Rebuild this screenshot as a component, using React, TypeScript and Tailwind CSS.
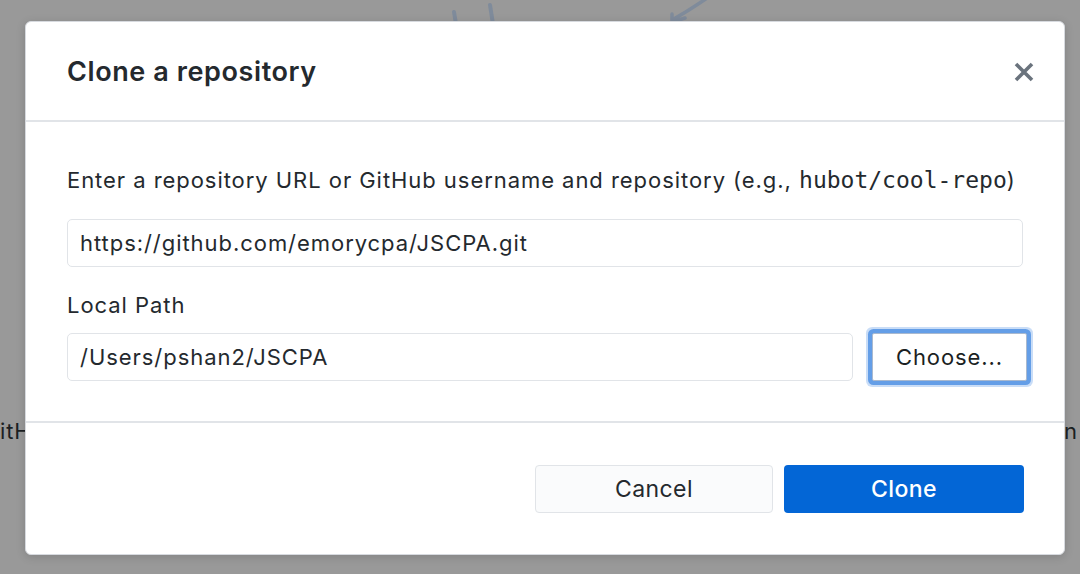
import React from "react";

export default function App() {
  return (
    <div className="relative h-[574px] w-[1080px] overflow-hidden bg-[#999999] font-['Inter','Noto_Sans',sans-serif] text-[#24292e]">
      {/* page content visible behind the backdrop */}
      <svg className="absolute left-[440px] top-0" width="280" height="24" viewBox="0 0 280 24" fill="none">
        <path d="M14 12 L16 24" stroke="#7f8b9b" strokeWidth="4" strokeLinecap="round" />
        <path d="M50 5 L53 24" stroke="#7f8b9b" strokeWidth="4" strokeLinecap="round" />
        <path d="M232 14 L232 22 L245 18 M232 20 Q250 10 270 -4" stroke="#7f8b9b" strokeWidth="3.5" strokeLinecap="round" fill="none" />
      </svg>
      <div className="absolute left-[0px] top-[417px] text-[22px] leading-[28px] tracking-[0.8px] text-[#1b1f23]">itHub</div>
      <div className="absolute left-[1064px] top-[417px] text-[22px] leading-[28px] text-[#1b1f23]">n</div>

      <div className="relative pl-[25px] pt-[21px]">
        <div className="w-[1040px] rounded-[6px] border border-[#d7dadf] bg-white shadow-[0_2px_10px_rgba(0,0,0,0.15)]">
          {/* header */}
          <div className="flex h-[100px] items-center justify-between border-b-2 border-[#e1e4e8] pl-[41px] pr-[29px]">
            <h1 className="mt-[3px] text-[27px] font-semibold tracking-[0.6px] text-[#24292e]">Clone a repository</h1>
            <svg width="22" height="22" viewBox="0 0 22 22" className="mt-[1px]">
              <path d="M3 3 L19 19 M19 3 L3 19" stroke="#6a737d" strokeWidth="3.6" strokeLinecap="butt" />
            </svg>
          </div>

          {/* body */}
          <div className="px-[41px] pb-[40px] pt-[44px]">
            <p className="whitespace-nowrap text-[22px] leading-[28px] tracking-[0.95px]">
              Enter a repository URL or GitHub username and repository (e.g.,{" "}
              <code className="font-['DejaVu_Sans_Mono',monospace] text-[23px] tracking-normal">hubot/cool-repo</code>)
            </p>
            <div className="mt-[25px] flex h-[48px] items-center rounded-[5px] border border-[#e1e4e8] px-[12px] text-[22px] tracking-[0.95px]">
              https://github.com/emorycpa/JSCPA.git
            </div>
            <div className="mt-[24px] text-[22px] leading-[28px] tracking-[0.95px]">Local Path</div>
            <div className="mt-[14px] flex items-center gap-[19px]">
              <div className="flex h-[48px] w-[786px] shrink-0 items-center rounded-[5px] border border-[#e1e4e8] px-[12px] text-[22px] tracking-[0.95px]">
                /Users/pshan2/JSCPA
              </div>
              <button className="flex h-[48px] w-[155px] shrink-0 items-center justify-center rounded-[2px] border border-[#a9b9cf] bg-white text-[22px] tracking-[0.9px] text-[#1b1f23] shadow-[0_0_0_4px_#649ee7,0_0_0_6px_rgba(100,158,231,0.35)]">
                Choose...
              </button>
            </div>
          </div>

          {/* footer */}
          <div className="flex justify-end gap-[11px] border-t-2 border-[#e1e4e8] pb-[41px] pl-[41px] pr-[40px] pt-[42px]">
            <button className="flex h-[48px] w-[238px] items-center justify-center rounded-[4px] border border-[#e1e4e8] bg-[#fafbfc] text-[23px] tracking-[0.4px] text-[#24292e]">
              Cancel
            </button>
            <button className="flex h-[48px] w-[240px] items-center justify-center rounded-[4px] bg-[#0366d6] text-[23px] font-medium tracking-[0.4px] text-white">
              Clone
            </button>
          </div>
        </div>
      </div>
    </div>
  );
}
